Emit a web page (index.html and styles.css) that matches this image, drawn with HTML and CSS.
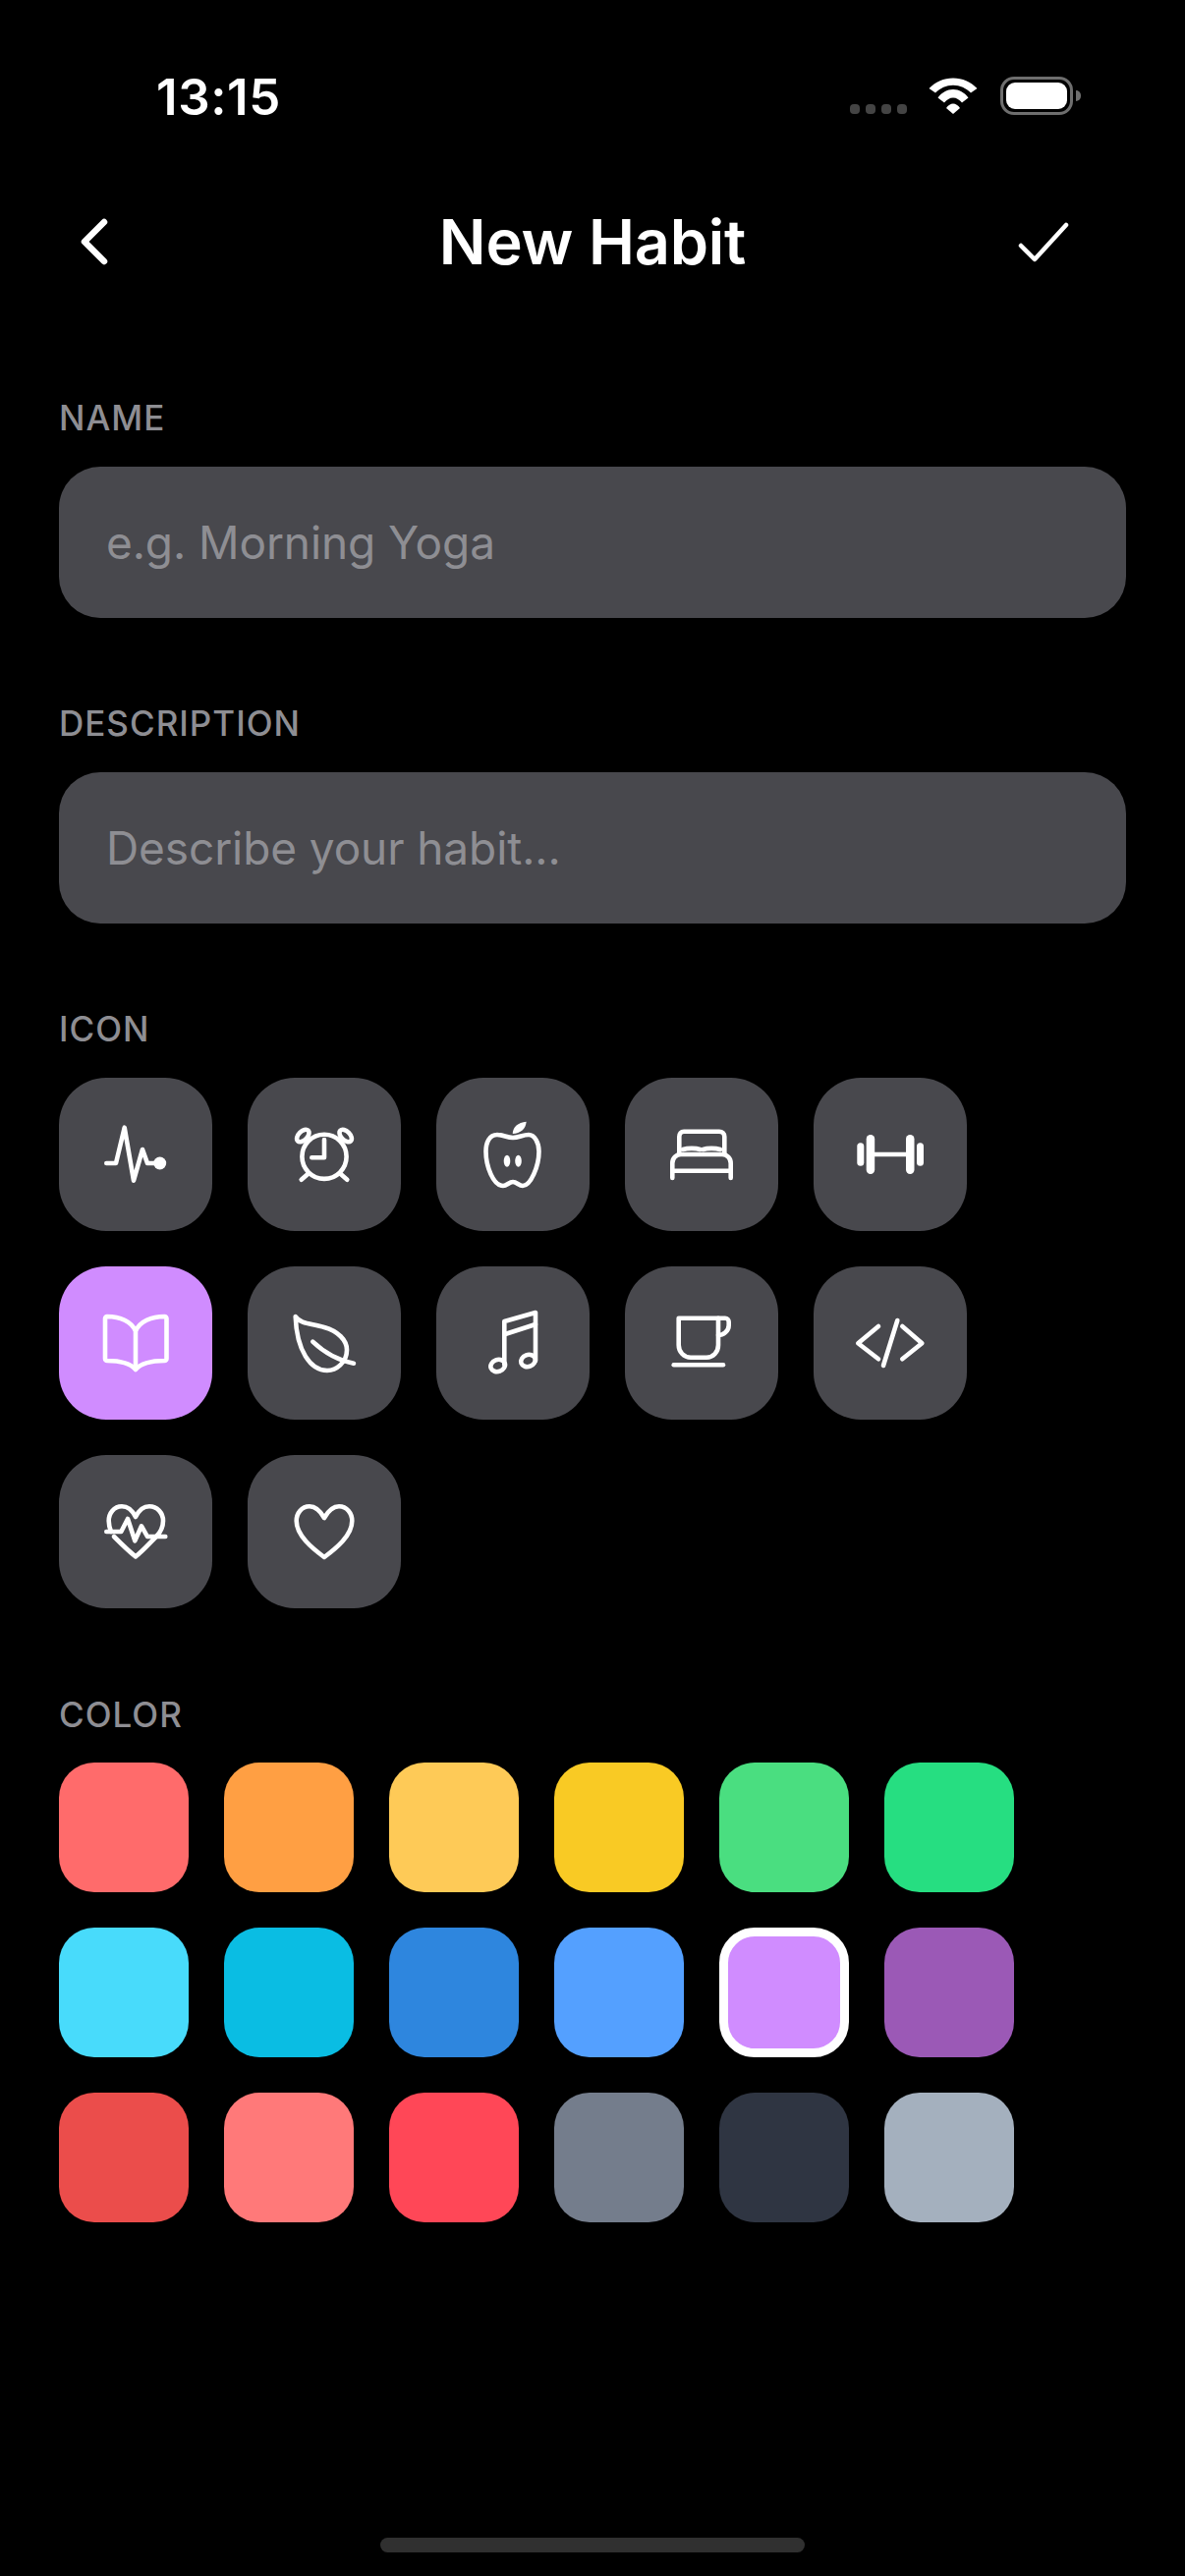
FILE: index.html
```html
<!DOCTYPE html>
<html lang="en">
<head>
  <meta charset="UTF-8">
  <meta name="viewport" content="width=device-width, initial-scale=1.0">
  <title>New Habit</title>
  <link rel="stylesheet" href="styles.css">
</head>

<body>
  <div class="screen">
    <div class="status-bar">
      <span class="time">13:15</span>
      <div class="status-icons">
        <div class="signal"><i></i><i></i><i></i><i></i></div>
        <svg class="wifi" width="50" height="37" viewBox="0 0 50 37" fill="#fff">
          <path d="M0.5 11C7 4.5 15.5 0.5 25 0.5S43 4.5 49.5 11L43 15.5C38 10.5 32 7.7 25 7.7S12 10.5 7 15.5Z"/>
          <path d="M9.5 20.5C13.5 15 19 12 25 12S36.5 15 40.5 20.5L34 25.5C31.5 22.5 28.5 20.5 25 20.5S18.5 22.5 16 25.5Z"/>
          <path d="M18 31C20 28 22.5 26.5 25 26.5S30 28 32 31L25 37Z"/>
        </svg>
        <div class="battery">
          <div class="battery-fill"></div>
        </div>
      </div>
    </div>

    <div class="nav">
      <svg class="nav-icon" width="120" height="96" viewBox="0 0 120 96" stroke-width="6.5">
        <path d="M46 28L26 48L46 68"/>
      </svg>
      <h1>New Habit</h1>
      <svg class="nav-icon" width="120" height="96" viewBox="0 0 120 96" stroke-width="4.5">
        <path d="M13 52L27 66L59 31"/>
      </svg>
    </div>

    <form class="habit-form">
      <label for="name">NAME</label>
      <input type="text" id="name" placeholder="e.g. Morning Yoga">

      <label for="description">DESCRIPTION</label>
      <input type="text" id="description" placeholder="Describe your habit...">

      <span class="label">ICON</span>
      <div class="icon-grid">
        <div class="icon-tile">
          <svg viewBox="0 0 72 72"><path d="M6.3 45H16L24.7 8.7L34 62.7L43 31L48 45H56"/><circle class="solid" cx="60.7" cy="45" r="6.5"/></svg>
        </div>
        <div class="icon-tile">
          <svg viewBox="0 0 72 72"><circle cx="36" cy="38.3" r="22.6"/><path d="M36 21V39.3H23.3M19.3 56L12.7 61.7M52.7 56L59.3 61.7"/><ellipse cx="14.3" cy="17" rx="7.5" ry="4.5" transform="rotate(-45 14.3 17)"/><ellipse cx="57.7" cy="17" rx="7.5" ry="4.5" transform="rotate(45 57.7 17)"/></svg>
        </div>
        <div class="icon-tile">
          <svg viewBox="0 0 72 72"><path d="M36 19C30 19 26 16 20 16C12 16 8.5 24 8.5 33C8.5 48 16 68 26 68C30 68 32 64 36 64C40 64 42 68 46 68C54 68 62.5 48 62.5 33C62.5 24 58 16 52 16C46 16 42 19 36 19Z"/><path class="solid" d="M35.7 15C36 8 41 3.5 49.7 2.7C49 10 44 14.5 35.7 15Z"/><ellipse class="solid" cx="30" cy="42.7" rx="3.3" ry="6"/><ellipse class="solid" cx="41.5" cy="42.7" rx="3.3" ry="6"/></svg>
        </div>
        <div class="icon-tile">
          <svg viewBox="0 0 72 72"><path d="M13.3 35V18C13.3 15 15 12.7 18 12.7H54C57 12.7 59.3 15 59.3 18V35"/><path d="M17 31C22 29.5 30 29.5 34.5 31M37.5 31C42 29.5 50 29.5 55 31"/><path d="M6.3 60V45C6.3 40 10 36 15 36H57C62 36 65.7 40 65.7 45V60M6.3 52.7H65.7"/></svg>
        </div>
        <div class="icon-tile">
          <svg viewBox="0 0 72 72"><path d="M18 36H54"/><rect class="solid" x="2.3" y="24.3" width="7" height="23.4" rx="3.5"/><rect class="solid" x="11.7" y="16" width="8.5" height="40" rx="4.2"/><rect class="solid" x="52" y="16" width="8.5" height="40" rx="4.2"/><rect class="solid" x="63" y="24.3" width="7" height="23.4" rx="3.5"/></svg>
        </div>
      </div>
      <div class="icon-grid">
        <div class="icon-tile selected">
          <svg viewBox="0 0 72 72"><path d="M36 24C32 14 20 9 7 9A2 2 0 0 0 5 11V52A2 2 0 0 0 7 54C20 54 30 56 36 63C42 56 52 54 65.5 54A2 2 0 0 0 67.5 52V11A2 2 0 0 0 65.5 9C52 9 40 14 36 24V63"/></svg>
        </div>
        <div class="icon-tile">
          <svg viewBox="0 0 72 72"><path d="M6.7 9C12 17 24 16 36 20C50 24 59 33 59 43C59 56 48 64 39 64C22 64 8 44 6.7 9Z"/><path d="M24.3 34.7C32 42 46 53 66 56.7"/></svg>
        </div>
        <div class="icon-tile">
          <svg viewBox="0 0 72 72"><path d="M27.3 58V14L59 5V54"/><path d="M27.3 27.3L59 17"/><ellipse cx="20.7" cy="59" rx="7.5" ry="6" transform="rotate(-20 20.7 59)"/><ellipse cx="51.5" cy="54" rx="7.5" ry="6" transform="rotate(-20 51.5 54)"/></svg>
        </div>
        <div class="icon-tile">
          <svg viewBox="0 0 72 72"><path d="M12.7 10.7H53V38C53 45 48 50.7 41 50.7H25C18 50.7 12.7 45 12.7 38Z"/><path d="M53 10.7H60A3.7 3.7 0 0 1 63.7 14.4V18C63.7 24 58 28 53 28"/><path d="M7.7 58.3H58"/></svg>
        </div>
        <div class="icon-tile">
          <svg viewBox="0 0 72 72"><path d="M24 19L3.3 36.3L24 52.3M48.3 19L68.3 36.3L48.3 52.3M43.3 13L29 59"/></svg>
        </div>
      </div>
      <div class="icon-grid">
        <div class="icon-tile">
          <svg viewBox="0 0 72 72"><path d="M11 36C9.5 32 8.7 28 8.7 25C8.7 17 14 10.3 22 10.3C28 10.3 33 15 36 21C39 15 44 10.3 50 10.3C58 10.3 64 17 64 25C64 31 62 36 57 41C51 47 43 56 36 61.3C29 56 21 48 14 41"/><path d="M6.3 36H21.3L28 23L35.3 45.3L42 30.3L48 41H66.3"/></svg>
        </div>
        <div class="icon-tile">
          <svg viewBox="0 0 72 72"><path d="M36 22C32 15 27 10.3 21 10.3C13 10.3 7.7 17 7.7 25C7.7 40 24 53 36 62C48 53 64.3 40 64.3 25C64.3 17 59 10.3 51 10.3C45 10.3 40 15 36 22Z"/></svg>
        </div>
      </div>

      <span class="label color-label">COLOR</span>
      <div class="color-grid">
        <div class="swatch c1"></div>
        <div class="swatch c2"></div>
        <div class="swatch c3"></div>
        <div class="swatch c4"></div>
        <div class="swatch c5"></div>
        <div class="swatch c6"></div>
        <div class="swatch c7"></div>
        <div class="swatch c8"></div>
        <div class="swatch c9"></div>
        <div class="swatch c10"></div>
        <div class="swatch c11 selected"></div>
        <div class="swatch c12"></div>
        <div class="swatch c13"></div>
        <div class="swatch c14"></div>
        <div class="swatch c15"></div>
        <div class="swatch c16"></div>
        <div class="swatch c17"></div>
        <div class="swatch c18"></div>
      </div>
    </form>

    <div class="home-indicator"></div>
  </div>
</body>
</html>
```

FILE: styles.css
```css
* {
  box-sizing: border-box;
}

body {
  margin: 0;
  background-color: #000;
  color: #fff;
  font-family: Inter, "Liberation Sans", sans-serif;
}

.screen {
  width: 1206px;
  height: 2622px;
  position: relative;
  overflow: hidden;
  background-color: #000;
}

.status-bar {
  height: 198px;
  padding: 72px 114px 0 159px;
  display: flex;
  justify-content: space-between;
  align-items: flex-start;
}

.time {
  font-size: 51px;
  line-height: 54px;
  font-weight: 600;
  letter-spacing: 0.6px;
}

.status-icons {
  display: flex;
  align-items: flex-start;
}

.signal {
  display: flex;
  gap: 6px;
  margin-top: 34px;
  margin-right: 22px;
}

.signal i {
  width: 10px;
  height: 10px;
  border-radius: 4px;
  background-color: #444;
}

.wifi {
  margin-top: 7px;
  margin-right: 23px;
}

.battery {
  width: 74px;
  height: 39px;
  margin-top: 6px;
  border: 3px solid #6e6e6e;
  border-radius: 14px;
  padding: 3px;
  position: relative;
}

.battery::after {
  content: "";
  position: absolute;
  right: -11px;
  top: 11px;
  width: 5px;
  height: 11px;
  border-radius: 0 6px 6px 0;
  background-color: #6e6e6e;
}

.battery-fill {
  height: 100%;
  border-radius: 9px;
  background-color: #fff;
}

.nav {
  height: 96px;
  padding: 0 60px;
  display: flex;
  justify-content: space-between;
  align-items: center;
}

.nav-icon {
  fill: none;
  stroke: #fff;
  stroke-linecap: round;
  stroke-linejoin: round;
}

.nav h1 {
  margin: 0;
  font-size: 63px;
  line-height: 72px;
  font-weight: 600;
  letter-spacing: -0.2px;
}

.habit-form {
  padding: 109px 60px 0;
  display: flex;
  flex-direction: column;
}

label,
.label {
  display: block;
  font-size: 35px;
  line-height: 44px;
  font-weight: 500;
  letter-spacing: 1px;
  color: #8e8e93;
  margin-bottom: 28px;
}

input[type="text"] {
  width: 100%;
  height: 154px;
  padding: 0 48px;
  margin-bottom: 85px;
  border: none;
  border-radius: 42px;
  background-color: #48484d;
  color: #fff;
  font-family: inherit;
  font-size: 46px;
  letter-spacing: -0.1px;
  outline: none;
}

input::placeholder {
  color: #8e8e93;
  opacity: 1;
}

.icon-grid {
  display: flex;
  gap: 36px;
  margin-bottom: 36px;
}

.icon-tile {
  width: 156px;
  height: 156px;
  border-radius: 48px;
  background-color: #48484d;
  display: flex;
  justify-content: center;
  align-items: center;
}

.icon-tile.selected {
  background-color: #d08cff;
}

.icon-tile svg {
  width: 72px;
  height: 72px;
  fill: none;
  stroke: #fff;
  stroke-width: 4.6;
  stroke-linecap: round;
  stroke-linejoin: round;
}

.icon-tile .solid {
  fill: #fff;
  stroke: none;
}

.color-label {
  margin-top: 50px;
}

.color-grid {
  display: grid;
  grid-template-columns: repeat(6, 132px);
  gap: 36px;
  margin-top: -1px;
}

.swatch {
  height: 132px;
  border-radius: 36px;
}

.swatch.selected {
  border: 9px solid #fff;
}

.c1 { background-color: #ff6b6b; }
.c2 { background-color: #ff9f43; }
.c3 { background-color: #feca57; }
.c4 { background-color: #f9ca24; }
.c5 { background-color: #4ade80; }
.c6 { background-color: #26de81; }
.c7 { background-color: #48dbfb; }
.c8 { background-color: #0abde3; }
.c9 { background-color: #2e86de; }
.c10 { background-color: #54a0ff; }
.c11 { background-color: #d08cff; }
.c12 { background-color: #9b59b6; }
.c13 { background-color: #eb4d4b; }
.c14 { background-color: #ff7979; }
.c15 { background-color: #ff4757; }
.c16 { background-color: #747d8c; }
.c17 { background-color: #2f3542; }
.c18 { background-color: #a4b0be; }

.home-indicator {
  position: absolute;
  left: 387px;
  bottom: 24px;
  width: 432px;
  height: 15px;
  border-radius: 8px;
  background-color: #303030;
}
```
